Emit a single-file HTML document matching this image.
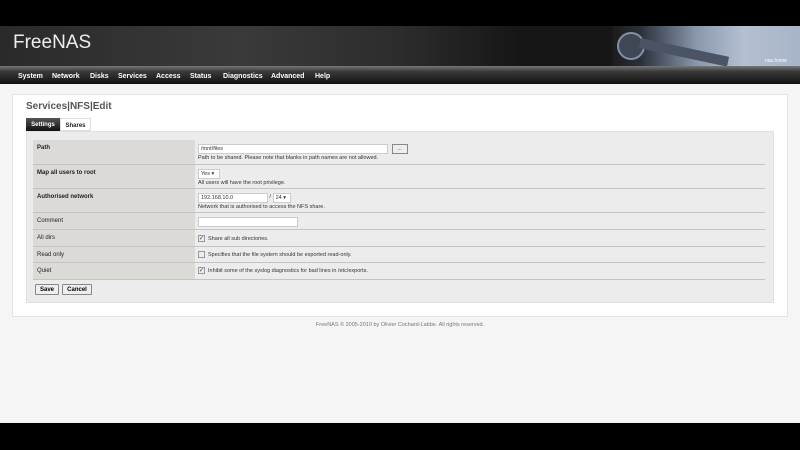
<!DOCTYPE html>
<html><head><style>
*{margin:0;padding:0;box-sizing:border-box}
body{width:800px;height:450px;background:#000;font-family:"Liberation Sans",sans-serif;position:relative;overflow:hidden}
.abs{position:absolute}
#hdr{left:0;top:26px;width:800px;height:40px;background:linear-gradient(90deg,#2a2a2a 0%,#3a3a3a 30%,#2c2c2c 50%,#161616 65%,#161616 100%)}
#logo{left:13px;top:32px;color:#eee;font-size:19px}
#img{left:612px;top:26px;width:188px;height:40px;background:linear-gradient(90deg,#1b1b1b 0%,#2a303a 15%,#8a98ad 45%,#b4c0d2 70%,#a8b4c7 100%)}
#nav{left:0;top:66px;width:800px;height:18px;background:linear-gradient(#777 0%,#3a3a3a 30%,#111 100%)}
#nav span{color:#fff;font-size:7px;font-weight:bold;position:absolute;top:7px}
#page{left:0;top:84px;width:800px;height:339px;background:#f5f5f5}
#box{left:12px;top:94px;width:776px;height:223px;background:#fff;border:1px solid #e4e4e4}
#title{left:26px;top:101px;font-size:10px;font-weight:bold;color:#555}
.tab{top:118px;height:13px;font-size:6px;font-weight:bold;padding-top:4px;text-align:center}
#form{left:26px;top:131px;width:748px;height:172px;background:#ececec;border:1px solid #e0e0e0}
.row{position:absolute;left:33px;width:732px;border-bottom:1px solid #c4c4c4}
.lab{position:absolute;left:0;top:0;bottom:0;width:162px;background:#dcdad6;font-size:6px;color:#222;padding:5px 4px}
.val{position:absolute;left:163px;top:0;font-size:5.5px;color:#333;padding:4px 2px;line-height:8px}
.inp{display:inline-block;background:#fff;border:1px solid #ccc;height:10px;font-size:5.5px;padding:1px 2px;vertical-align:top;line-height:7px}
.cb{display:inline-block;width:7px;height:7px;border:1px solid #999;background:#eee;vertical-align:middle;margin-right:3px;font-size:6px;line-height:6px;text-align:center;color:#336}
.btn{position:absolute;top:284px;height:11px;border:1px solid #888;background:#eee;font-size:6px;font-weight:bold;padding-top:2px;text-align:center;border-radius:1px}
#foot{left:0;top:322px;width:800px;text-align:center;font-size:5.5px;color:#777}
</style></head><body>
<div class="abs" id="hdr"></div>
<div class="abs" id="img"></div>
<div class="abs" style="left:617px;top:32px;width:28px;height:28px;border-radius:50%;background:#3e4756;border:2px solid #8590a2"></div>
<div class="abs" style="left:640px;top:38px;width:90px;height:10px;background:#4a5464;transform:rotate(12deg);transform-origin:left center"></div>
<div class="abs" style="left:765px;top:58px;font-size:5px;color:#fff">nas.home</div>
<div class="abs" id="logo">FreeNAS</div>
<div class="abs" id="nav">
<span style="left:18px">System</span><span style="left:52px">Network</span><span style="left:90px">Disks</span><span style="left:118px">Services</span><span style="left:156px">Access</span><span style="left:190px">Status</span><span style="left:223px">Diagnostics</span><span style="left:271px">Advanced</span><span style="left:315px">Help</span>
</div>
<div class="abs" id="page"></div>
<div class="abs" id="box"></div>
<div class="abs" id="title">Services|NFS|Edit</div>
<div class="abs tab" style="left:26px;width:34px;background:linear-gradient(#555,#111);color:#fff">Settings</div>
<div class="abs tab" style="left:60px;width:31px;background:#fff;border:1px solid #ddd;color:#222">Shares</div>
<div class="abs" id="form"></div>
<div class="row" style="top:140px;height:25px"><div class="lab"><b>Path</b></div><div class="val"><span class="inp" style="width:190px">/mnt/files</span> <span class="inp" style="width:16px;margin-left:2px;background:#eee;border-color:#888;text-align:center">...</span><br>Path to be shared. Please note that blanks in path names are not allowed.</div></div>
<div class="row" style="top:165px;height:24px"><div class="lab"><b>Map all users to root</b></div><div class="val"><span class="inp" style="width:22px">Yes ▾</span><br>All users will have the root privilege.</div></div>
<div class="row" style="top:189px;height:24px"><div class="lab"><b>Authorised network</b></div><div class="val"><span class="inp" style="width:70px">192.168.10.0</span> / <span class="inp" style="width:18px">24 ▾</span><br>Network that is authorised to access the NFS share.</div></div>
<div class="row" style="top:213px;height:17px"><div class="lab">Comment</div><div class="val"><span class="inp" style="width:100px"></span></div></div>
<div class="row" style="top:230px;height:17px"><div class="lab">All dirs</div><div class="val" style="padding-top:5px"><span class="cb">✓</span>Share all sub directories.</div></div>
<div class="row" style="top:247px;height:16px"><div class="lab">Read only</div><div class="val" style="padding-top:4px"><span class="cb"></span>Specifies that the file system should be exported read-only.</div></div>
<div class="row" style="top:263px;height:17px"><div class="lab">Quiet</div><div class="val" style="padding-top:4px"><span class="cb">✓</span>Inhibit some of the syslog diagnostics for bad lines in /etc/exports.</div></div>
<div class="btn" style="left:35px;width:24px">Save</div>
<div class="btn" style="left:62px;width:30px">Cancel</div>
<div class="abs" id="foot">FreeNAS © 2005-2010 by Olivier Cochard-Labbe. All rights reserved.</div>
</body></html>
